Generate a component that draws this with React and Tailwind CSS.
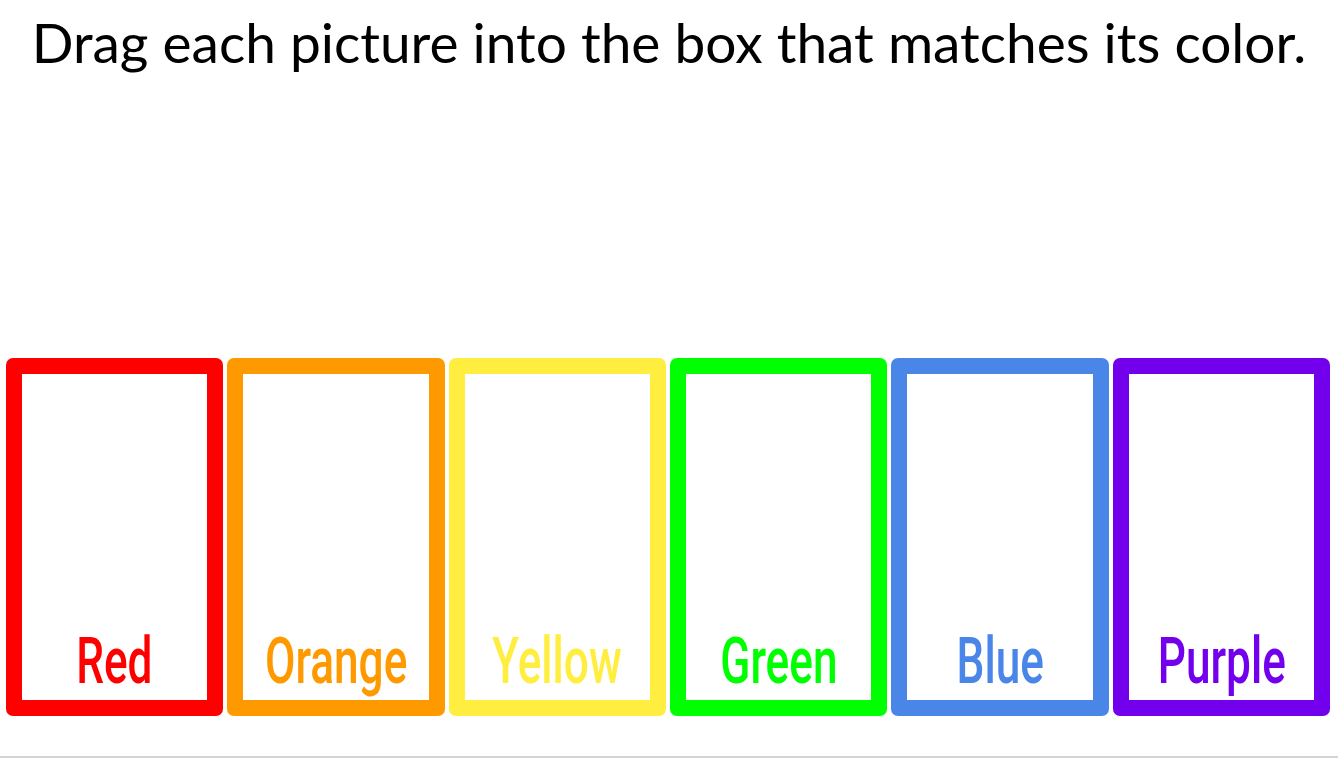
const bins = [
    { label: 'Red', border: 'border-[#ff0000]', text: 'text-[#ff0000]' },
    { label: 'Orange', border: 'border-[#ff9900]', text: 'text-[#ff9900]' },
    { label: 'Yellow', border: 'border-[#ffee3f]', text: 'text-[#ffee3f]' },
    { label: 'Green', border: 'border-[#00ff00]', text: 'text-[#00ff00]' },
    { label: 'Blue', border: 'border-[#4a86e8]', text: 'text-[#4a86e8]' },
    { label: 'Purple', border: 'border-[#7300ec]', text: 'text-[#7300ec]' },
];

function ColorBin({ bin }) {
    return (
        <div
            className={`flex-1 min-w-0 basis-0 h-[358px] border-[16px] rounded-[7px] bg-white flex flex-col justify-end items-center pb-[6px] overflow-hidden ${bin.border}`}
        >
            <span
                className={`block whitespace-nowrap text-[64px] leading-none font-medium scale-x-[0.69] font-['Roboto',sans-serif] ${bin.text}`}
            >
                {bin.label}
            </span>
        </div>
    );
}

export default function App() {
    return (
        <div className="w-full h-[758px] bg-white border-b-2 border-[#d4d4d4] flex flex-col">
            <h1 className="pt-[15px] text-center text-[55px] leading-none text-black font-['Lato',sans-serif] font-normal">
                Drag each picture into the box that matches its color.
            </h1>

            <div className="mt-[288px] flex gap-[4px] pl-[6px] pr-[8px]">
                {bins.map((bin) => (
                    <ColorBin key={bin.label} bin={bin} />
                ))}
            </div>
        </div>
    );
}
